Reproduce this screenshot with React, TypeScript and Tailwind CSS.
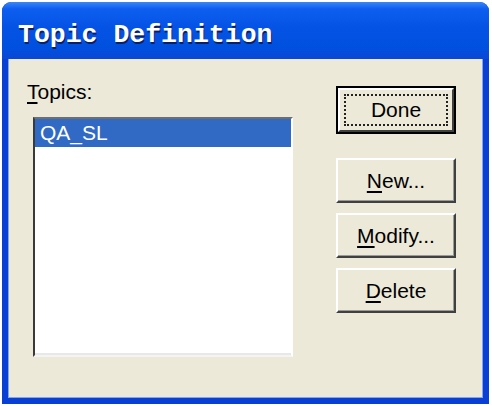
const sans = "font-['Liberation_Sans',Arial,sans-serif]";

const XpButton = ({ label, mnemonic }: { label: string; mnemonic: number }) => {
    return (
        <button className={`w-[120px] h-[45px] bg-[#ece9d8] border-2 border-t-white border-l-white border-b-[#404040] border-r-[#404040] shadow-[inset_-1px_-1px_0_#9a9a9a] text-[21px] text-black ${sans}`}>
            {label.slice(0, mnemonic)}
            <span className="underline underline-offset-[3px] decoration-[2px]">{label[mnemonic]}</span>
            {label.slice(mnemonic + 1)}
        </button>
    );
};

export default function App() {
    return (
        <div className="w-[492px] h-[406px] bg-white pt-[2px] pl-[2px] pr-[3px] pb-[2px]">
            <div className="w-full h-full flex flex-col rounded-t-[9px] overflow-hidden bg-[#0a3fd6]">
                <div className="h-[57px] flex items-center pl-[16px] pt-[10px] bg-[linear-gradient(to_bottom,#3a86f6_0%,#0d5ef0_12%,#0553e4_45%,#0050e0_80%,#0a48d4_100%)]">
                    <span className="font-['Liberation_Mono',monospace] font-bold text-[26.5px] tracking-[0px] text-white [text-shadow:1px_2px_0_#0b1f66]">
                        Topic Definition
                    </span>
                </div>
                <div className="flex-1 px-[6px] pb-[6px] bg-[#0a3fd6]">
                    <div className="w-full h-full flex bg-[#ece9d8] border-l border-r border-b border-[#7fa6ee] pl-[18px] pt-[21px]">
                        <div className="flex flex-col">
                            <div className={`text-[21px] leading-[23px] text-black ${sans}`}>
                                <span className="underline underline-offset-[3px] decoration-[2px]">T</span>opics:
                            </div>
                            <div className="ml-[6px] mt-[14px] w-[260px] h-[240px] bg-white border-2 border-t-[#6e6e6e] border-l-[#3a3a3a] border-b-[#f4f4f4] border-r-white shadow-[inset_0_-2px_0_#e8e8e8]">
                                <div className={`h-[28px] bg-[#316ac5] text-white text-[21px] leading-[28px] pl-[5px] ${sans}`}>QA_SL</div>
                            </div>
                        </div>
                        <div className="ml-[43px] mt-[6px] flex flex-col">
                            <div className="w-[120px] h-[48px] border-2 border-black">
                                <div className="w-full h-full border-2 border-t-white border-l-white border-b-[#404040] border-r-[#404040] p-[4px]">
                                    <div className={`w-full h-full border-2 border-dotted border-[#222] flex items-center justify-center text-[21px] text-black ${sans}`}>
                                        Done
                                    </div>
                                </div>
                            </div>
                            <div className="mt-[24px] flex flex-col gap-[10px]">
                                <XpButton label="New..." mnemonic={0} />
                                <XpButton label="Modify..." mnemonic={0} />
                                <XpButton label="Delete" mnemonic={0} />
                            </div>
                        </div>
                    </div>
                </div>
            </div>
        </div>
    );
}
